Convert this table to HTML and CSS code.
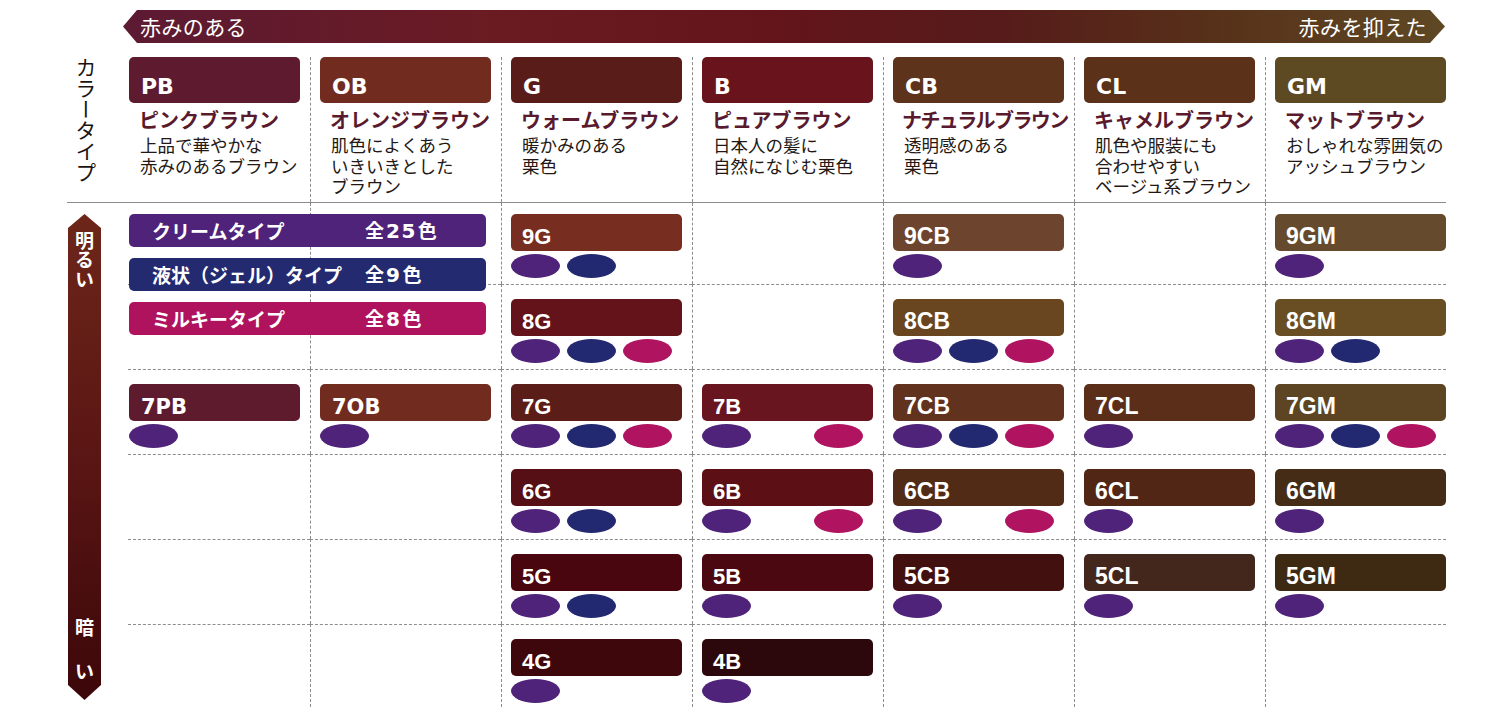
FILE: index.html
```html
<!DOCTYPE html>
<html lang="ja">
<head>
<meta charset="utf-8">
<title>カラータイプ</title>
<link rel="stylesheet" href="styles.css">
</head>
<body>
<div class="page">
  <div class="scale"><span>赤みのある</span><span>赤みを抑えた</span></div>
  <div class="chart">
    <div class="side-head"><span class="vlabel">カラータイプ</span></div>
    <div class="heads">
      <div class="head"><div class="hcard k-pb">PB</div><div class="hname">ピンクブラウン</div><div class="hdesc">上品で華やかな<br>赤みのあるブラウン</div></div>
      <div class="head"><div class="hcard k-ob">OB</div><div class="hname">オレンジブラウン</div><div class="hdesc">肌色によくあう<br>いきいきとした<br>ブラウン</div></div>
      <div class="head"><div class="hcard k-g">G</div><div class="hname">ウォームブラウン</div><div class="hdesc">暖かみのある<br>栗色</div></div>
      <div class="head"><div class="hcard k-b">B</div><div class="hname">ピュアブラウン</div><div class="hdesc">日本人の髪に<br>自然になじむ栗色</div></div>
      <div class="head"><div class="hcard k-cb">CB</div><div class="hname tight">ナチュラルブラウン</div><div class="hdesc">透明感のある<br>栗色</div></div>
      <div class="head"><div class="hcard k-cl">CL</div><div class="hname">キャメルブラウン</div><div class="hdesc">肌色や服装にも<br>合わせやすい<br>ベージュ系ブラウン</div></div>
      <div class="head"><div class="hcard k-gm">GM</div><div class="hname">マットブラウン</div><div class="hdesc">おしゃれな雰囲気の<br>アッシュブラウン</div></div>
    </div>
    <div class="side-body">
      <div class="bright">
        <span class="b-top">明るい</span>
        <span class="b-bot"><span>暗</span><span>い</span></span>
      </div>
    </div>
    <div class="body">
      <!-- row 9 -->
      <div class="c"></div>
      <div class="c"></div>
      <div class="c"><div class="card k-9g">9G</div><div class="dots"><i class="dot p"></i><i class="dot n"></i></div></div>
      <div class="c"></div>
      <div class="c"><div class="card nar k-9cb">9CB</div><div class="dots"><i class="dot p"></i></div></div>
      <div class="c"></div>
      <div class="c"><div class="card nar k-9gm">9GM</div><div class="dots"><i class="dot p"></i></div></div>
      <!-- row 8 -->
      <div class="c"></div>
      <div class="c"></div>
      <div class="c"><div class="card k-8g">8G</div><div class="dots"><i class="dot p"></i><i class="dot n"></i><i class="dot m"></i></div></div>
      <div class="c"></div>
      <div class="c"><div class="card nar k-8cb">8CB</div><div class="dots"><i class="dot p"></i><i class="dot n"></i><i class="dot m"></i></div></div>
      <div class="c"></div>
      <div class="c"><div class="card nar k-8gm">8GM</div><div class="dots"><i class="dot p"></i><i class="dot n"></i></div></div>
      <!-- row 7 -->
      <div class="c"><div class="card wide k-7pb">7PB</div><div class="dots"><i class="dot p"></i></div></div>
      <div class="c"><div class="card wide k-7ob">7OB</div><div class="dots"><i class="dot p"></i></div></div>
      <div class="c"><div class="card k-7g">7G</div><div class="dots"><i class="dot p"></i><i class="dot n"></i><i class="dot m"></i></div></div>
      <div class="c"><div class="card k-7b">7B</div><div class="dots"><i class="dot p"></i><i class="dot x"></i><i class="dot m"></i></div></div>
      <div class="c"><div class="card nar k-7cb">7CB</div><div class="dots"><i class="dot p"></i><i class="dot n"></i><i class="dot m"></i></div></div>
      <div class="c"><div class="card nar k-7cl">7CL</div><div class="dots"><i class="dot p"></i></div></div>
      <div class="c"><div class="card nar k-7gm">7GM</div><div class="dots"><i class="dot p"></i><i class="dot n"></i><i class="dot m"></i></div></div>
      <!-- row 6 -->
      <div class="c"></div>
      <div class="c"></div>
      <div class="c"><div class="card k-6g">6G</div><div class="dots"><i class="dot p"></i><i class="dot n"></i></div></div>
      <div class="c"><div class="card k-6b">6B</div><div class="dots"><i class="dot p"></i><i class="dot x"></i><i class="dot m"></i></div></div>
      <div class="c"><div class="card nar k-6cb">6CB</div><div class="dots"><i class="dot p"></i><i class="dot x"></i><i class="dot m"></i></div></div>
      <div class="c"><div class="card nar k-6cl">6CL</div><div class="dots"><i class="dot p"></i></div></div>
      <div class="c"><div class="card nar k-6gm">6GM</div><div class="dots"><i class="dot p"></i></div></div>
      <!-- row 5 -->
      <div class="c"></div>
      <div class="c"></div>
      <div class="c"><div class="card k-5g">5G</div><div class="dots"><i class="dot p"></i><i class="dot n"></i></div></div>
      <div class="c"><div class="card k-5b">5B</div><div class="dots"><i class="dot p"></i></div></div>
      <div class="c"><div class="card nar k-5cb">5CB</div><div class="dots"><i class="dot p"></i></div></div>
      <div class="c"><div class="card nar k-5cl">5CL</div><div class="dots"><i class="dot p"></i></div></div>
      <div class="c"><div class="card nar k-5gm">5GM</div><div class="dots"><i class="dot p"></i></div></div>
      <!-- row 4 -->
      <div class="c"></div>
      <div class="c"></div>
      <div class="c"><div class="card k-4g">4G</div><div class="dots"><i class="dot p"></i></div></div>
      <div class="c"><div class="card k-4b">4B</div><div class="dots"><i class="dot p"></i></div></div>
      <div class="c"></div>
      <div class="c"></div>
      <div class="c"></div>

      <div class="legend">
        <div class="lg lg-cream"><span class="lg-name">クリームタイプ</span><span>全<span class="num">25</span>色</span></div>
        <div class="lg lg-gel"><span class="lg-name">液状（ジェル）タイプ</span><span>全<span class="num">9</span>色</span></div>
        <div class="lg lg-milky"><span class="lg-name">ミルキータイプ</span><span>全<span class="num">8</span>色</span></div>
      </div>
    </div>
  </div>
</div>
</body>
</html>
```
FILE: styles.css
```css
* { box-sizing: border-box; margin: 0; padding: 0; }
body {
  background: #fff;
  font-family: "Noto Sans CJK JP", "Noto Sans", sans-serif;
  color: #231815;
}
.page { width: 1506px; height: 727px; padding-top: 10px; overflow: hidden; }

/* top scale arrow */
.scale {
  margin-left: 123px;
  width: 1322px;
  height: 33px;
  display: flex;
  justify-content: space-between;
  align-items: center;
  padding: 0 18px 0 17px;
  color: #fff;
  font-size: 21px;
  line-height: 1;
  letter-spacing: 0.4px;
  background: linear-gradient(90deg, #5c1a33 0%, #6a1b22 28%, #64141b 48%, #561b1a 66%, #573019 82%, #5e4824 100%);
  clip-path: polygon(14px 0, calc(100% - 15px) 0, 100% 50%, calc(100% - 15px) 100%, 14px 100%, 0 50%);
}

.chart {
  display: grid;
  grid-template-columns: 119px 1327px;
  grid-template-rows: 145px 505px;
  margin-top: 14px;
}

.side-head { padding-left: 75px; }
.vlabel {
  display: block;
  writing-mode: vertical-rl;
  font-size: 21px;
  line-height: 21px;
  color: #1a1311;
}

.heads {
  display: grid;
  grid-template-columns: repeat(6, 191px) 181px;
}
.head {
  padding: 0 0 0 9px;
  border-left: 1px dashed #8c8c8c;
}
.head:first-child { border-left: none; padding-left: 10px; }

.hcard {
  width: 171px;
  height: 46px;
  border-radius: 5px;
  color: #fff;
  font-family: "DejaVu Sans", "Liberation Sans", sans-serif;
  font-weight: 700;
  font-size: 22px;
  line-height: 1;
  display: flex;
  align-items: flex-end;
  padding: 0 0 5px 12px;
}
.hname {
  margin-top: 5px;
  padding-left: 10px;
  font-size: 20px;
  line-height: 24px;
  font-weight: 700;
  color: #5a1a2e;
  white-space: nowrap;
}
.hname.tight { letter-spacing: -1.6px; padding-left: 9px; }
.hdesc {
  margin-top: 3px;
  padding-left: 11px;
  font-size: 17.5px;
  line-height: 20.5px;
  color: #231815;
  white-space: nowrap;
}

/* left brightness arrow */
.side-body {
  margin-left: 67px;
  border-top: 1px solid #8c8c8c;
}
.bright {
  margin: 11px 0 0 1px;
  width: 33px;
  height: 486px;
  background: linear-gradient(180deg, #6d2619 0%, #5a1614 50%, #3c0709 100%);
  clip-path: polygon(50% 0, 100% 14px, 100% calc(100% - 15px), 50% 100%, 0 calc(100% - 15px), 0 14px);
  display: flex;
  flex-direction: column;
  justify-content: space-between;
  align-items: center;
  padding: 17px 0 19px;
  color: #fff;
  font-weight: 700;
}
.b-top {
  writing-mode: vertical-rl;
  font-size: 19px;
  line-height: 19px;
  letter-spacing: 0.5px;
}
.b-bot {
  display: flex;
  flex-direction: column;
  align-items: center;
  gap: 24px;
  font-size: 19px;
  line-height: 20px;
}

/* body grid */
.body {
  position: relative;
  border-top: 1px solid #8c8c8c;
  display: grid;
  grid-template-columns: repeat(6, 191px) 181px;
  grid-template-rows: 81px 85px 85px 85px 85px 83px;
}
.c {
  border-top: 1px dashed #8c8c8c;
  border-left: 1px dashed #8c8c8c;
  padding: 14px 0 0 9px;
}
.c:nth-child(7n+1) {
  border-left: none;
  margin-left: 9px;
  padding-left: 1px;
}
.c:nth-child(-n+7) {
  border-top: none;
  padding-top: 11px;
}

.card {
  width: 171px;
  height: 37px;
  border-radius: 5px;
  color: #fff;
  font-family: "Liberation Sans", Arial, sans-serif;
  font-weight: 700;
  font-size: 22px;
  line-height: 1;
  display: flex;
  align-items: flex-end;
  padding: 0 0 3px 11px;
}
.card.nar { font-family: "Liberation Sans Narrow", "Liberation Sans", sans-serif; font-size: 23px; }
.card.wide { font-family: "DejaVu Sans", "Liberation Sans", sans-serif; font-size: 21px; padding-left: 12px; }

.dots { display: flex; gap: 7px; margin-top: 3px; }
.dot { display: block; width: 49px; height: 24px; border-radius: 50%; }
.dot.p { background: #4f2379; }
.dot.n { background: #232970; }
.dot.m { background: #b01360; }
.dot.x { visibility: hidden; }

/* legend */
.legend {
  position: absolute;
  left: 10px;
  top: 11px;
  width: 357px;
  display: flex;
  flex-direction: column;
  gap: 11px;
}
.lg {
  height: 33px;
  border-radius: 5px;
  color: #fff;
  font-size: 19px;
  font-weight: 700;
  line-height: 1;
  display: flex;
  align-items: center;
  padding-left: 23px;
  white-space: nowrap;
}
.lg-name { width: 213px; }
.num {
  font-family: "DejaVu Sans", "Liberation Sans", sans-serif;
  font-weight: 700;
  font-size: 20px;
  letter-spacing: 1.5px;
  margin: 0 1px 0 2px;
}
.lg-cream { background: #4f237a; }
.lg-gel { background: #232a6f; }
.lg-milky { background: #b0135e; }

/* header colours */
.k-pb { background: #5e1a2e; }
.k-ob { background: #722c1f; }
.k-g { background: #5a1c19; }
.k-b { background: #69141c; }
.k-cb { background: #5d331b; }
.k-cl { background: #5b3119; }
.k-gm { background: #5e4a22; }

/* swatch colours */
.k-9g { background: #772e21; }
.k-8g { background: #631319; }
.k-7g { background: #5b1d18; }
.k-6g { background: #550f15; }
.k-5g { background: #4a060e; }
.k-4g { background: #3e070b; }
.k-7b { background: #681520; }
.k-6b { background: #5c1016; }
.k-5b { background: #4b0810; }
.k-4b { background: #2c070c; }
.k-9cb { background: #6d442d; }
.k-8cb { background: #694520; }
.k-7cb { background: #61321d; }
.k-6cb { background: #512b16; }
.k-5cb { background: #42110f; }
.k-7cl { background: #5a2e18; }
.k-6cl { background: #512614; }
.k-5cl { background: #43271d; }
.k-9gm { background: #654a2e; }
.k-8gm { background: #6a4e23; }
.k-7gm { background: #5d4523; }
.k-6gm { background: #452c16; }
.k-5gm { background: #3e2913; }
.k-7pb { background: #5e1b2e; }
.k-7ob { background: #722b1f; }
```
